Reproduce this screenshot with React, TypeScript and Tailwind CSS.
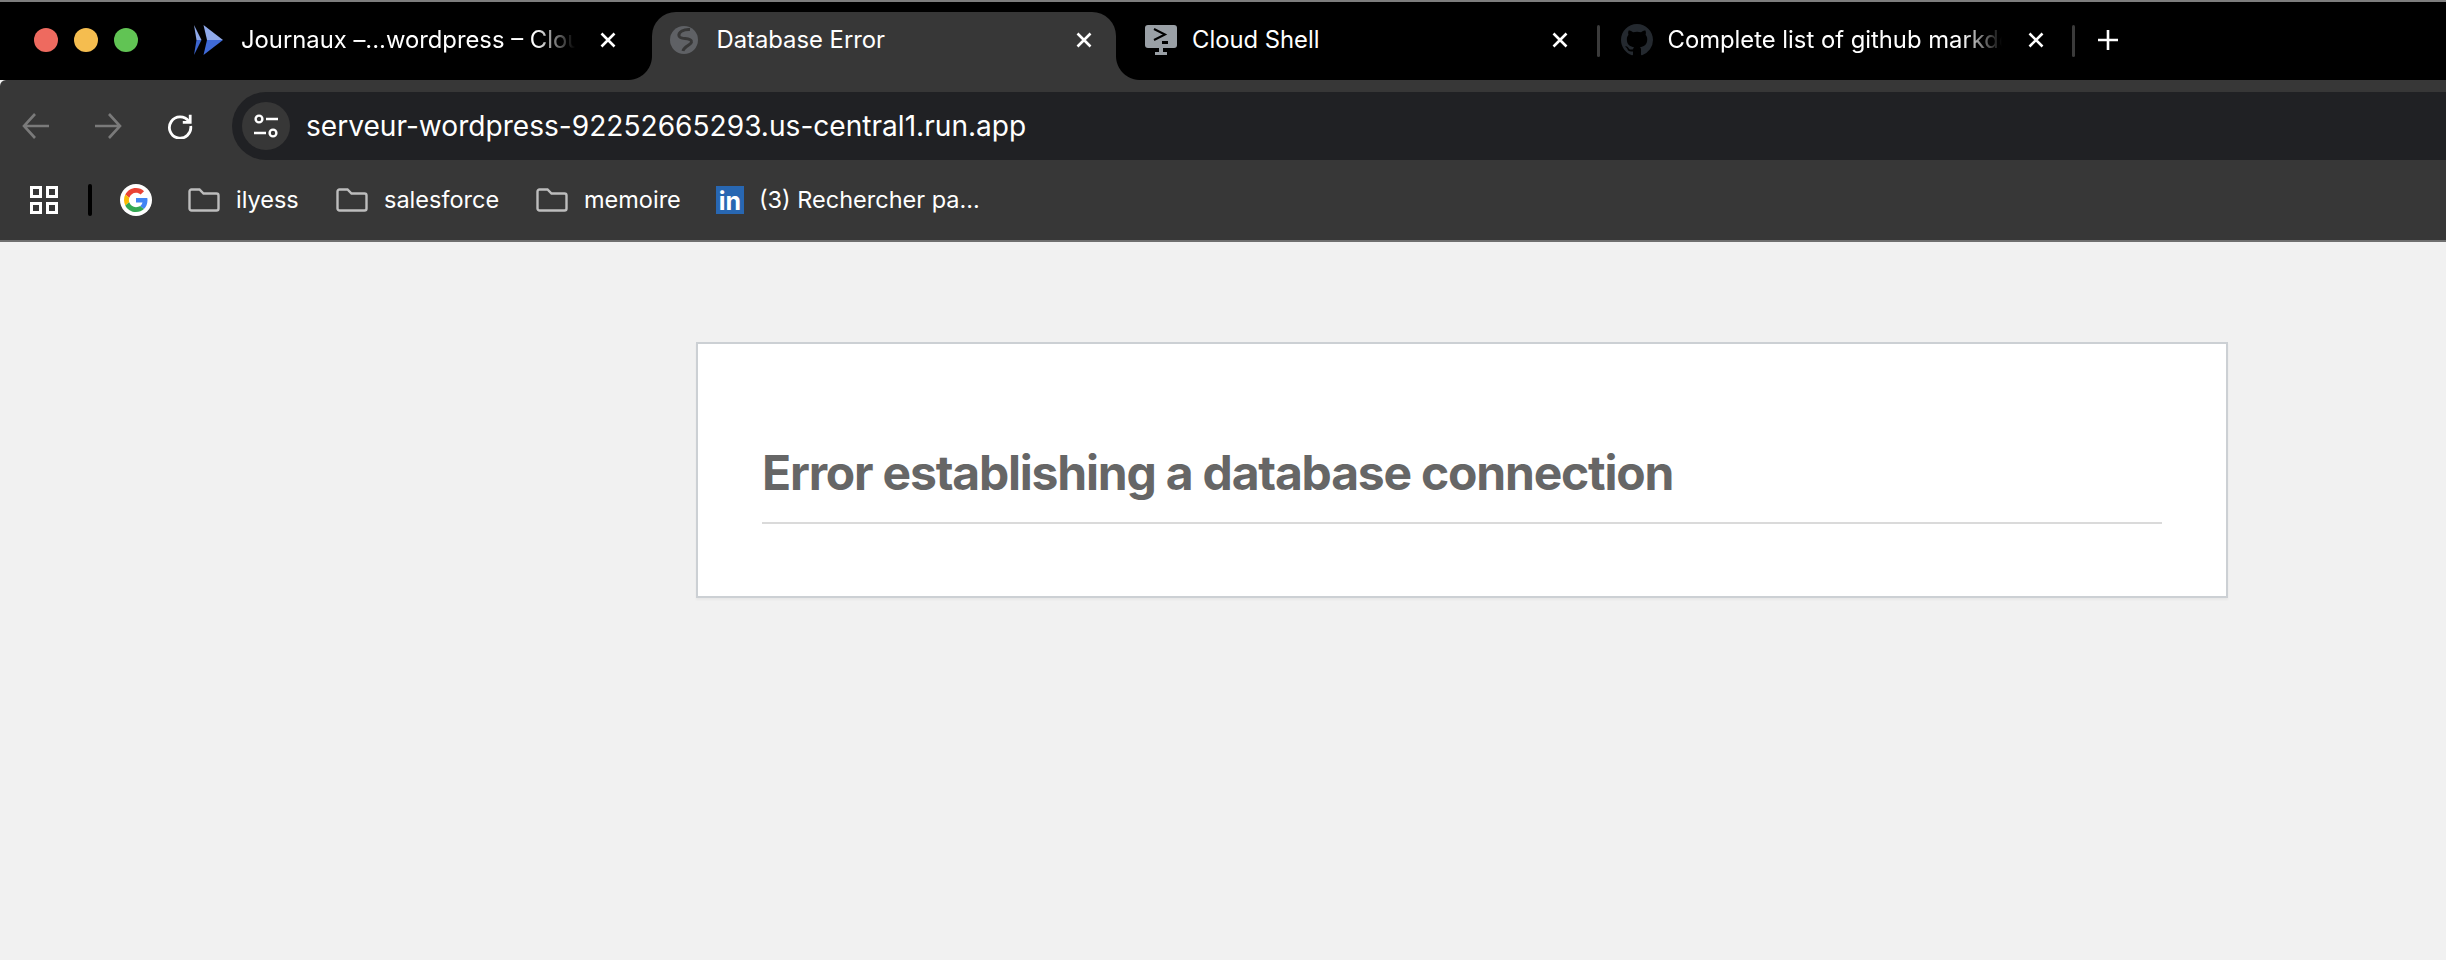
import type { ReactNode } from 'react'

const CloudRunIcon = () => (
    <svg width="30" height="30" viewBox="0 0 30 30">
        <path d="M0 0 L7.5 15 L2.5 15 Z" fill="#8fa9ea" />
        <path d="M2.5 15 L7.5 15 L0 30 Z" fill="#3d66cf" />
        <path d="M9.5 0 L29 15 L13 15 Z" fill="#8fa9ea" />
        <path d="M13 15 L29 15 L9.5 30 Z" fill="#3f6ad8" />
    </svg>
)

const GlobeIcon = () => (
    <svg width="28" height="28" viewBox="0 0 28 28">
        <circle cx="14" cy="14" r="14" fill="#5f6165" />
        <path d="M20 3.5 C14 3 8 6 9 10 C10 14 21 11 21.5 15.5 C22 19 14 20 13 25" fill="none" stroke="#373737" strokeWidth="3" />
    </svg>
)

const ShellIcon = () => (
    <svg width="32" height="30" viewBox="0 0 32 30">
        <rect x="0" y="0" width="32" height="23" rx="3" fill="#9aa0a6" />
        <path d="M9 4 L20 9.5 L9 15" fill="none" stroke="#000" strokeWidth="2" />
        <rect x="17" y="16" width="6" height="3" fill="#000" />
        <rect x="14" y="23" width="4" height="4" fill="#9aa0a6" />
        <rect x="10" y="27" width="12" height="3" fill="#9aa0a6" />
    </svg>
)

const GithubIcon = () => (
    <svg width="32" height="32" viewBox="0 0 16 16" fill="#24292f">
        <path d="M8 0C3.58 0 0 3.58 0 8c0 3.54 2.29 6.53 5.47 7.59.4.07.55-.17.55-.38 0-.19-.01-.82-.01-1.49-2.01.37-2.53-.49-2.69-.94-.09-.23-.48-.94-.82-1.13-.28-.15-.68-.52-.01-.53.63-.01 1.08.58 1.23.82.72 1.21 1.87.87 2.33.66.07-.52.28-.87.51-1.07-1.78-.2-3.64-.89-3.64-3.95 0-.87.31-1.59.82-2.15-.08-.2-.36-1.02.08-2.12 0 0 .67-.21 2.2.82.64-.18 1.32-.27 2-.27.68 0 1.36.09 2 .27 1.53-1.04 2.2-.82 2.2-.82.44 1.1.16 1.92.08 2.12.51.56.82 1.27.82 2.15 0 3.07-1.87 3.75-3.65 3.95.29.25.54.73.54 1.48 0 1.07-.01 1.93-.01 2.2 0 .21.15.46.55.38A8.013 8.013 0 0016 8c0-4.42-3.58-8-8-8z" />
    </svg>
)

const CloseIcon = () => (
    <svg width="16" height="16" viewBox="0 0 16 16" className="shrink-0">
        <path d="M1.5 1.5 L14.5 14.5 M14.5 1.5 L1.5 14.5" stroke="#fff" strokeWidth="2.6" />
    </svg>
)

const FolderIcon = () => (
    <svg width="32" height="24" viewBox="0 0 32 24" fill="none" className="shrink-0">
        <path d="M1.5 3.5 a2 2 0 0 1 2-2 h8 l4 4 h13 a2 2 0 0 1 2 2 v13 a2 2 0 0 1-2 2 h-25 a2 2 0 0 1-2-2 z" stroke="#bdbdbd" strokeWidth="2.4" />
    </svg>
)

const GoogleIcon = () => (
    <div className="flex h-8 w-8 shrink-0 items-center justify-center rounded-full bg-white">
        <svg width="24" height="24" viewBox="0 0 48 48">
            <path fill="#EA4335" d="M24 9.5c3.54 0 6.71 1.22 9.21 3.6l6.85-6.85C35.9 2.38 30.47 0 24 0 14.62 0 6.51 5.38 2.56 13.22l7.98 6.19C12.43 13.72 17.74 9.5 24 9.5z" />
            <path fill="#4285F4" d="M46.98 24.55c0-1.57-.15-3.09-.38-4.55H24v9.02h12.94c-.58 2.96-2.26 5.48-4.78 7.18l7.73 6c4.51-4.18 7.09-10.36 7.09-17.65z" />
            <path fill="#FBBC05" d="M10.53 28.59c-.48-1.45-.76-2.99-.76-4.59s.27-3.14.76-4.59l-7.98-6.19C.92 16.46 0 20.12 0 24c0 3.88.92 7.54 2.56 10.78l7.97-6.19z" />
            <path fill="#34A853" d="M24 48c6.48 0 11.93-2.13 15.89-5.81l-7.73-6c-2.15 1.45-4.92 2.3-8.16 2.3-6.26 0-11.57-4.22-13.47-9.91l-7.98 6.19C6.51 42.62 14.62 48 24 48z" />
        </svg>
    </div>
)

const Tab = ({ icon, title, active, fade, separator }: { icon: ReactNode; title: string; active?: boolean; fade?: boolean; separator?: boolean }) => (
    <div className="relative flex h-full w-[475.5px] shrink-0 items-center">
        <div className={`relative flex h-full w-[464px] items-center pb-[12px] pl-[18px] ${active ? 'rounded-t-[24px] bg-[#373737]' : ''}`}>
            {active && <div className="absolute bottom-0 left-[-24px] h-6 w-6 bg-[radial-gradient(circle_at_0_0,#000_23.5px,#373737_24.5px)]" />}
            {active && <div className="absolute bottom-0 right-[-24px] h-6 w-6 bg-[radial-gradient(circle_at_100%_0,#000_23.5px,#373737_24.5px)]" />}
            <div className="flex w-[47px] shrink-0 items-center">{icon}</div>
            <div className={`w-[334px] shrink-0 overflow-hidden text-[23.8px] leading-8 whitespace-nowrap text-white ${fade ? '[mask-image:linear-gradient(to_right,#000_88%,transparent_100%)]' : ''}`}>
                {title}
            </div>
            <div className={separator ? 'ml-[26px]' : 'ml-[25px]'}><CloseIcon /></div>
        </div>
        {separator && <div className="absolute top-[13px] right-[3px] h-8 w-[3px] rounded-sm bg-[#3b3b3b]" />}
    </div>
)

const Bookmark = ({ icon, label, className }: { icon: ReactNode; label: string; className: string }) => (
    <div className={`flex shrink-0 items-center ${className}`}>
        {icon}
        <span className="text-[23.5px] whitespace-nowrap text-white">{label}</span>
    </div>
)

export default function App() {
    return (
        <div className="flex h-[960px] w-full flex-col overflow-hidden bg-[#f1f1f1] font-['Inter',sans-serif]">
            {/* Tab strip */}
            <div className="flex h-20 shrink-0 items-stretch border-t-2 border-[#7d7d7d] bg-black pt-[10px]">
                <div className="flex w-[176px] shrink-0 items-center gap-4 pb-[12px] pl-[34px]">
                    <div className="h-6 w-6 rounded-full bg-[#ee6a5f]" />
                    <div className="h-6 w-6 rounded-full bg-[#f5bd4f]" />
                    <div className="h-6 w-6 rounded-full bg-[#61c454]" />
                </div>
                <Tab icon={<CloudRunIcon />} title="Journaux –...wordpress – Cloud Run" fade />
                <Tab icon={<GlobeIcon />} title="Database Error" active />
                <Tab icon={<ShellIcon />} title="Cloud Shell" separator />
                <Tab icon={<GithubIcon />} title="Complete list of github markdown" fade separator />
                <div className="flex items-center pb-[12px]">
                    <svg width="22" height="22" viewBox="0 0 22 22" className="ml-[19px]">
                        <path d="M11 1 V21 M1 11 H21" stroke="#fff" strokeWidth="2.6" />
                    </svg>
                </div>
            </div>

            {/* Toolbar */}
            <div className="flex h-20 shrink-0 items-end rounded-tl-[6px] bg-[#373737]">
                <div className="flex h-[68px] w-[232px] shrink-0 items-center pl-[21px]">
                    <svg width="30" height="30" viewBox="0 0 30 30" fill="none" stroke="#7a7a7a" strokeWidth="2.6">
                        <path d="M28 15 H3 M14 3 L3 15 L14 27" />
                    </svg>
                    <svg width="30" height="30" viewBox="0 0 30 30" fill="none" stroke="#7a7a7a" strokeWidth="2.6" className="ml-[42px]">
                        <path d="M2 15 H27 M16 3 L27 15 L16 27" />
                    </svg>
                    <svg width="26" height="26" viewBox="0 0 28 28" fill="none" stroke="#fff" strokeWidth="3" className="ml-[44px]">
                        <path d="M23.5 9 A11.5 11.5 0 1 0 25.5 14" />
                        <path d="M25 2 V10 H17" />
                    </svg>
                </div>
                <div className="flex h-[68px] flex-1 items-center rounded-l-[34px] bg-[#202124] pl-[10px]">
                    <div className="flex h-12 w-12 shrink-0 items-center justify-center rounded-full bg-[#373737]">
                        <svg width="30" height="26" viewBox="0 0 30 26" fill="none">
                            <circle cx="8" cy="6" r="3.4" stroke="#fff" strokeWidth="2.4" />
                            <path d="M15 6 H27 M3 20 H15" stroke="#fff" strokeWidth="2.4" />
                            <circle cx="22" cy="20" r="3.4" stroke="#fff" strokeWidth="2.4" />
                        </svg>
                    </div>
                    <span className="ml-[16px] text-[28.1px] text-white">serveur-wordpress-92252665293.us-central1.run.app</span>
                </div>
            </div>

            {/* Bookmarks bar */}
            <div className="flex h-[82px] shrink-0 items-center border-b-2 border-[#6f6f6f] bg-[#373737] pl-[30px]">
                <div className="grid h-7 w-7 shrink-0 grid-cols-2 gap-1">
                    <div className="border-[3px] border-white" />
                    <div className="border-[3px] border-white" />
                    <div className="border-[3px] border-white" />
                    <div className="border-[3px] border-white" />
                </div>
                <div className="ml-[30px] h-8 w-1 shrink-0 rounded-sm bg-black" />
                <div className="ml-[28px]"><GoogleIcon /></div>
                <Bookmark className="ml-[36px] w-[148px] gap-4" icon={<FolderIcon />} label="ilyess" />
                <Bookmark className="w-[200px] gap-4" icon={<FolderIcon />} label="salesforce" />
                <Bookmark className="w-[180px] gap-4" icon={<FolderIcon />} label="memoire" />
                <Bookmark
                    className="gap-[15px]"
                    icon={
                        <div className="flex h-7 w-7 shrink-0 items-end justify-center bg-[#2867b2] text-[25px] leading-[26px] font-bold text-white">in</div>
                    }
                    label="(3) Rechercher pa..."
                />
            </div>

            {/* Page */}
            <div className="flex-1 pt-[100px] pl-[696px]">
                <div className="h-[256px] w-[1532px] border-2 border-[#ccd0d4] bg-white px-[64px] shadow-[0_2px_2px_rgba(0,0,0,0.04)]">
                    <h1 className="mt-[94px] border-b-2 border-[#dadada] pb-[14px] text-[48px] leading-[70px] font-bold tracking-[-1.2px] text-[#666]">
                        Error establishing a database connection
                    </h1>
                </div>
            </div>
        </div>
    )
}
